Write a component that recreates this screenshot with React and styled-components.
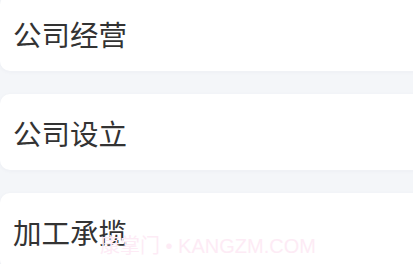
import styled, { createGlobalStyle } from 'styled-components'

const GlobalStyle = createGlobalStyle`
body {
	margin: 0;
	background: #f4f6f9;
	font-family: 'Noto Sans CJK SC', 'Noto Sans', sans-serif;
	overflow: hidden;
}
`

const Page = styled.div`
	position: relative;
	width: 413px;
	height: 264px;
	overflow: hidden;
`

const List = styled.div`
	display: flex;
	flex-direction: column;
	gap: 23px;
	margin-top: -5px;
	margin-right: -20px;
`

const Card = styled.div`
	display: flex;
	align-items: center;
	height: 76px;
	padding: 0 0 0 13px;
	box-sizing: border-box;
	background: #ffffff;
	border-radius: 10px;
	box-shadow: 0 1px 4px rgba(40, 60, 90, 0.04);
	font-size: 28.5px;
	color: #333333;
`

const Watermark = styled.div`
	position: absolute;
	left: 100px;
	top: 230px;
	font-family: 'Liberation Sans', 'Noto Sans CJK SC', sans-serif;
	font-size: 20px;
	color: #fdebf5;
	white-space: nowrap;
	pointer-events: none;
`

const items = ['公司经营', '公司设立', '加工承揽']

const App = () => {
	return (
		<>
			<GlobalStyle />
			<Page>
				<List>
					{items.map((name) => (
						<Card key={name}>{name}</Card>
					))}
				</List>
				<Watermark>康掌门 • KANGZM.COM</Watermark>
			</Page>
		</>
	)
}
export default App
